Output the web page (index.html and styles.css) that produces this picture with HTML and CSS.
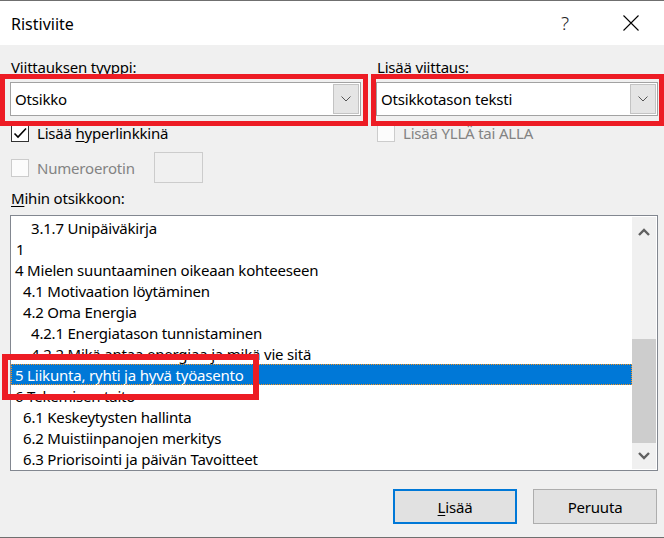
FILE: index.html
```html
<!DOCTYPE html>
<html lang="fi">
<head>
<meta charset="utf-8">
<title>Ristiviite</title>
<link rel="stylesheet" href="styles.css">
</head>
<body>
<div class="dialog">
  <header class="titlebar">
    <span class="title">Ristiviite</span>
    <span class="tb-btn tb-help">?</span>
    <span class="tb-btn tb-close">
      <svg width="16" height="16" viewBox="0 0 16 16"><path d="M0.5 0.5 L15.5 15.5 M15.5 0.5 L0.5 15.5" stroke="#000" stroke-width="1.1" fill="none"/></svg>
    </span>
  </header>

  <main class="body">
    <div class="options">
      <div class="col">
        <div class="field-label">Viittauksen t<u>y</u>yppi:</div>
        <div class="combo">
          <span class="combo-value">Otsikko</span>
          <span class="combo-btn">
            <svg width="10" height="6" viewBox="0 0 10 6"><path d="M0.5 0.5 L5 5 L9.5 0.5" stroke="#555" stroke-width="1" fill="none"/></svg>
          </span>
        </div>
        <div class="check-row">
          <span class="checkbox checked">
            <svg width="16" height="16" viewBox="0 0 16 16"><path d="M2.5 8.5 L6 12 L14 3.5" stroke="#000" stroke-width="1.6" fill="none"/></svg>
          </span>
          <span class="check-label">Lisää <u>h</u>yperlinkkinä</span>
        </div>
        <div class="check-row tall">
          <span class="checkbox disabled"></span>
          <span class="check-label disabled sep-label">Numeroerotin</span>
          <span class="textbox disabled"></span>
        </div>
      </div>
      <div class="col">
        <div class="field-label">Lisää <u>v</u>iittaus:</div>
        <div class="combo">
          <span class="combo-value">Otsikkotason teksti</span>
          <span class="combo-btn">
            <svg width="10" height="6" viewBox="0 0 10 6"><path d="M0.5 0.5 L5 5 L9.5 0.5" stroke="#555" stroke-width="1" fill="none"/></svg>
          </span>
        </div>
        <div class="check-row">
          <span class="checkbox disabled"></span>
          <span class="check-label disabled">Lisää YLLÄ tai ALLA</span>
        </div>
      </div>
    </div>

    <div class="field-label list-label"><u>M</u>ihin otsikkoon:</div>
    <div class="listbox">
      <ul class="items">
        <li class="lvl3">3.1.7 Unipäiväkirja</li>
        <li class="lvl1 one">1</li>
        <li class="lvl1">4 Mielen suuntaaminen oikeaan kohteeseen</li>
        <li class="lvl2">4.1 Motivaation löytäminen</li>
        <li class="lvl2">4.2 Oma Energia</li>
        <li class="lvl3">4.2.1 Energiatason tunnistaminen</li>
        <li class="lvl3">4.2.2 Mikä antaa energiaa ja mikä vie sitä</li>
        <li class="lvl1 selected">5 Liikunta, ryhti ja hyvä työasento</li>
        <li class="lvl1">6 Tekemisen taito</li>
        <li class="lvl2">6.1 Keskeytysten hallinta</li>
        <li class="lvl2">6.2 Muistiinpanojen merkitys</li>
        <li class="lvl2">6.3 Priorisointi ja päivän Tavoitteet</li>
      </ul>
      <div class="scrollbar">
        <span class="sb-btn sb-up">
          <svg width="12" height="8" viewBox="0 0 12 8"><path d="M1 7 L6 2 L11 7" stroke="#606060" stroke-width="2.4" fill="none"/></svg>
        </span>
        <span class="sb-track"><span class="sb-thumb"></span></span>
        <span class="sb-btn sb-down">
          <svg width="12" height="8" viewBox="0 0 12 8"><path d="M1 1 L6 6 L11 1" stroke="#606060" stroke-width="2.4" fill="none"/></svg>
        </span>
      </div>
    </div>

    <div class="actions">
      <button class="btn btn-default" type="button"><u>L</u>isää</button>
      <button class="btn" type="button">Peruuta</button>
    </div>
  </main>

  <!-- red highlight frames drawn over the dialog -->
  <div class="mark mark-type"></div>
  <div class="mark mark-insert"></div>
  <div class="mark mark-item"></div>
</div>
</body>
</html>
```

FILE: styles.css
```css
* { box-sizing: border-box; }

html, body {
  margin: 0;
  padding: 0;
}

body {
  width: 664px;
  height: 538px;
  overflow: hidden;
  background: #f0f0f0;
  color: #000;
  font-family: "Noto Sans", "Open Sans", sans-serif;
  font-size: 15px;
  letter-spacing: -0.2px;
}

u { text-decoration-thickness: 1px; text-underline-offset: 2px; }

.dialog {
  position: relative;
  width: 664px;
  height: 538px;
  display: flex;
  flex-direction: column;
  background: #f0f0f0;
  border-top: 1px solid #6f6f6f;
  border-bottom: 1px solid #6f6f6f;
}

/* title bar */
.titlebar {
  height: 44px;
  flex: none;
  display: flex;
  align-items: center;
  background: #fff;
  padding-left: 11px;
}

.title {
  flex: 1;
  font-size: 16px;
  line-height: 20px;
  margin-top: 1px;
  letter-spacing: 0;
}

.tb-btn {
  width: 66px;
  height: 44px;
  display: flex;
  align-items: center;
  justify-content: center;
}

.tb-help {
  font-size: 19px;
  font-weight: 300;
  color: #222;
}

/* dialog body */
.body {
  flex: 1;
  display: flex;
  flex-direction: column;
  padding: 12px 6px 13px 10px;
}

.options {
  display: grid;
  grid-template-columns: 351px 282px;
  column-gap: 15px;
  align-items: start;
}

.col {
  display: flex;
  flex-direction: column;
}

.field-label {
  height: 20px;
  line-height: 20px;
  padding-left: 1px;
}

.combo {
  margin-top: 5px;
  height: 34px;
  display: flex;
  align-items: center;
  padding: 1px;
  background: #fff;
  border: 1px solid #a2a2a2;
}

.combo-value {
  flex: 1;
  padding-left: 3px;
  line-height: 20px;
}

.combo-btn {
  width: 26px;
  height: 30px;
  display: flex;
  align-items: center;
  justify-content: center;
  background: #e5e5e5;
  border: 1px solid #c3c3c3;
}

.check-row {
  margin-top: 7px;
  height: 20px;
  display: flex;
  align-items: center;
}

.check-row.tall {
  margin-top: 9px;
  height: 31px;
}

.checkbox {
  width: 18px;
  height: 18px;
  margin-left: 1px;
  display: flex;
  align-items: center;
  justify-content: center;
  background: #fff;
  border: 1px solid #333;
}

.checkbox.disabled {
  border-color: #cccccc;
  background: #fcfcfc;
}

.check-label {
  margin-left: 8px;
  line-height: 20px;
}

.check-label.disabled { color: #838383; }

.sep-label { width: 117px; }

.textbox {
  width: 49px;
  height: 31px;
  border: 1px solid #cccccc;
  background: #f0f0f0;
}

.list-label { margin-top: 5px; }

/* heading list */
.listbox {
  margin-top: 7px;
  height: 256px;
  display: flex;
  background: #fff;
  border: 1px solid #828790;
  padding: 1px 1px 1px 0;
}

.items {
  flex: 1;
  list-style: none;
  margin: 0;
  padding: 0;
  overflow: hidden;
}

.items li {
  height: 21px;
  padding-top: 1px;
  line-height: 20px;
  white-space: nowrap;
}

.items .lvl1 { padding-left: 4px; }
.items .lvl2 { padding-left: 12px; }
.items .lvl3 { padding-left: 20px; }
.items .one { padding-left: 5px; }

.items .selected {
  background: #0078d7;
  color: #fff;
  outline: 1px dotted #f7931e;
  outline-offset: -1px;
}

.scrollbar {
  width: 24px;
  display: flex;
  flex-direction: column;
  background: #f0f0f0;
}

.sb-btn {
  height: 26px;
  flex: none;
  display: flex;
  align-items: center;
  justify-content: center;
}

.sb-up svg { margin-top: 4px; }

.sb-track {
  flex: 1;
  display: flex;
  flex-direction: column;
}

.sb-thumb {
  margin-top: 96px;
  height: 104px;
  background: #cdcdcd;
}

/* buttons */
.actions {
  margin-top: 18px;
  display: flex;
  justify-content: flex-end;
  gap: 16px;
  padding-right: 1px;
}

.btn {
  width: 124px;
  height: 35px;
  margin: 0;
  padding: 0;
  font-family: inherit;
  font-size: 15px;
  letter-spacing: -0.2px;
  color: #000;
  background: #e1e1e1;
  border: 1px solid #adadad;
}

.btn-default { border: 2px solid #0078d7; }

/* red highlight frames */
.mark {
  position: absolute;
  border: 5px solid #ed1c24;
  pointer-events: none;
}

.mark-type { left: 0; top: 73px; width: 368px; height: 52px; }
.mark-insert { left: 371px; top: 73px; width: 293px; height: 52px; }
.mark-item { left: 2px; top: 353px; width: 257px; height: 46px; border-width: 6px; }
```
